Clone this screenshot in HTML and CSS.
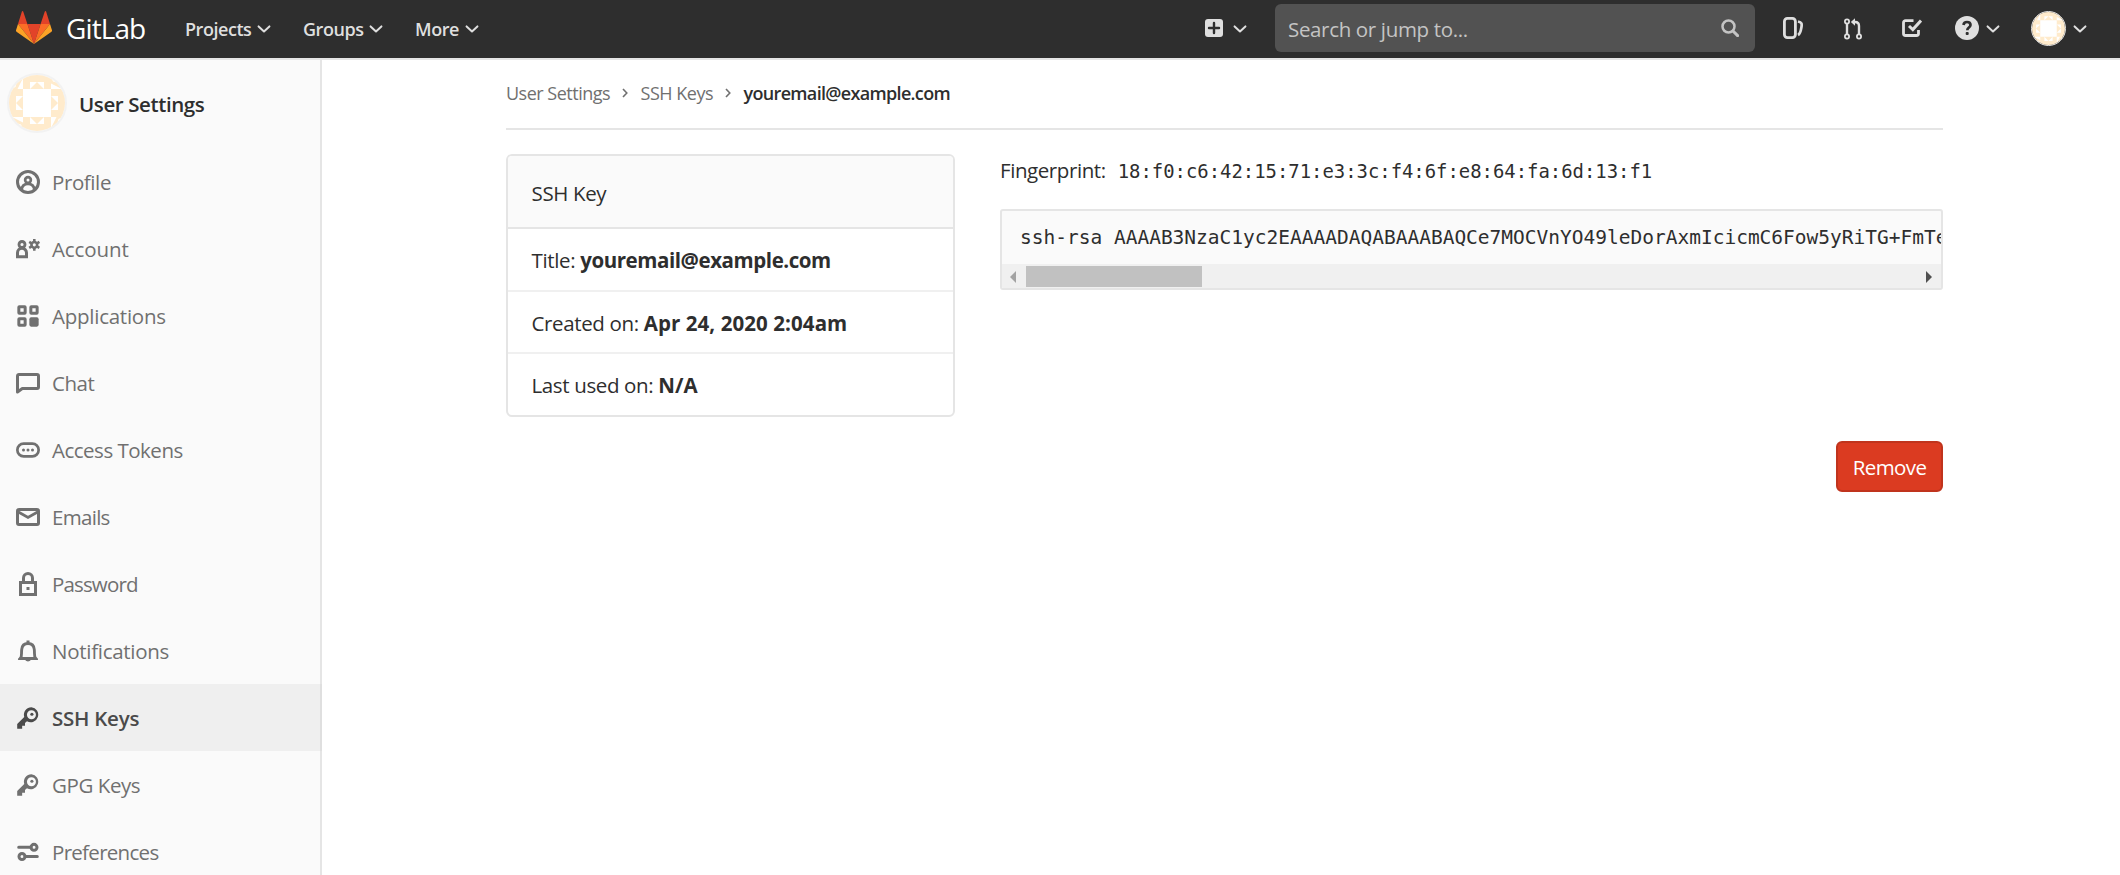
FILE: index.html
```html
<!DOCTYPE html>
<html lang="en">
<head>
<meta charset="utf-8">
<title>youremail@example.com · SSH Keys · User Settings · GitLab</title>
<link rel="stylesheet" href="styles.css">
</head>
<body>
<svg width="0" height="0" class="defs">
  <symbol id="chev" viewBox="0 0 14 8"><path d="M1.6 1.4 7 6.4l5.400-5" fill="none" stroke="currentColor" stroke-width="2" stroke-linecap="round" stroke-linejoin="round"/></symbol>
  <symbol id="sep" viewBox="0 0 6 10"><path d="M1 1l3.800 4L1 9" fill="none" stroke="currentColor" stroke-width="1.600"/></symbol>
  <symbol id="identicon" viewBox="0 0 56 56">
    <rect width="56" height="56" fill="#ffebcc"/>
    <g fill="#fff">
      <rect x="14" y="14" width="28" height="28"/>
      <g id="edge"><path d="M21 7h14v7L28 7l-7 7z"/><path d="M14 3v11H8.500zM8 6.500 6.500 12 2 14z"/></g>
      <use href="#edge" transform="rotate(90 28 28)"/><use href="#edge" transform="rotate(180 28 28)"/><use href="#edge" transform="rotate(270 28 28)"/>
    </g>
  </symbol>
  <symbol id="key" viewBox="0 0 16 16"><path d="M10.300 .8a5 5 0 0 0-4.800 6.500L.8 12v3.200h3.300v-2H6V11.300l1.300-1.200A5 5 0 1 0 10.300.8zm0 2a3 3 0 1 1 0 6 3 3 0 0 1 0-6z" fill="currentColor" fill-rule="evenodd"/><circle cx="10.600" cy="5.500" r="1.050" fill="currentColor"/></symbol>
</svg>
<header class="navbar">
  <svg class="logo" viewBox="0 0 36 33"><path fill="#e24329" d="M18 33l6.600-20H11.400z"/><path fill="#fc6d26" d="M18 33l-6.600-20H2zM18 33l6.600-20H34z"/><path fill="#fca326" d="M2 13 0 19.200c-.2.600 0 1.200.5 1.500L18 33zM34 13l2 6.200c.2.600 0 1.200-.5 1.500L18 33z"/><path fill="#e24329" d="M2 13h9.400L7.200.6c-.2-.7-1.100-.7-1.300 0zM34 13h-9.400L28.800.6c.2-.7 1.100-.7 1.300 0z"/></svg>
  <span class="brand">GitLab</span>
  <nav class="menu">
    <a class="m1">Projects</a><svg class="chev"><use href="#chev"/></svg>
    <a class="m2">Groups</a><svg class="chev"><use href="#chev"/></svg>
    <a class="m3">More</a><svg class="chev"><use href="#chev"/></svg>
  </nav>
  <div class="tools">
    <svg class="plus" viewBox="0 0 18 18"><rect width="18" height="18" rx="3" fill="currentColor"/><path d="M9 4v10M4 9h10" stroke="#2e2e2e" stroke-width="2.400" stroke-linecap="round"/></svg>
    <svg class="chev plus-chev"><use href="#chev"/></svg>
    <div class="search"><span>Search or jump to...</span><svg viewBox="0 0 18 18"><circle cx="7.500" cy="7.500" r="6" fill="none" stroke="currentColor" stroke-width="2.500"/><path d="M12 12l4.600 4.600" stroke="currentColor" stroke-width="3" stroke-linecap="round"/></svg></div>
    <svg class="issues" viewBox="0 0 20 22"><rect x="1.400" y="1.400" width="11" height="19.200" rx="3" fill="none" stroke="currentColor" stroke-width="2.800"/><path d="M15 4.500c3.800.8 4.100 2 3.400 6-.8 4.800-1.300 6.500-3.400 7.500" fill="none" stroke="currentColor" stroke-width="2.700"/></svg>
    <svg class="merge" viewBox="0 0 18 22"><g fill="none" stroke="currentColor"><g stroke-width="1.800"><circle cx="3" cy="3.500" r="2.100"/><circle cx="3" cy="18.500" r="2.100"/><circle cx="15" cy="18.500" r="2.100"/></g><path d="M3 5.500v11M15 16.500V8c0-2.500-1-4-4-4H9.500" stroke-width="2.400"/></g><path d="M6.800 4 11 .2v7.600z" fill="currentColor"/></svg>
    <svg class="todo" viewBox="0 0 20 20"><path d="M11.500 2.700H3.500a2 2 0 0 0-2 2v10.800a2 2 0 0 0 2 2h11a2 2 0 0 0 2-2v-3.500" fill="none" stroke="currentColor" stroke-width="2.800"/><path d="M7 8l3.800 3.500L19 2.500" fill="none" stroke="currentColor" stroke-width="3"/></svg>
    <svg class="help" viewBox="0 0 24 24"><circle cx="12" cy="12" r="12" fill="currentColor"/><path d="M8.500 9c.2-2 1.500-3 3.500-3s3.500 1.200 3.500 3c0 2.500-3.200 2.600-3.200 5.200" fill="none" stroke="#2e2e2e" stroke-width="2.700"/><rect x="10.700" y="16" width="3" height="3" rx="1" fill="#2e2e2e"/></svg>
    <svg class="chev help-chev"><use href="#chev"/></svg>
    <svg class="avatar-sm"><use href="#identicon"/></svg>
    <svg class="chev user-chev"><use href="#chev"/></svg>
  </div>
</header>
<div class="page">
  <aside class="sidebar">
    <div class="context"><svg class="avatar"><use href="#identicon"/></svg><strong>User Settings</strong></div>
    <ul>
      <li><svg viewBox="0 0 16 16"><g fill="none" stroke="currentColor" stroke-width="2"><circle cx="8" cy="8" r="7"/><circle cx="8" cy="6.700" r="1.900" stroke-width="1.800"/><path d="M3.700 13.300c.3-2.800 1.800-4 4.300-4s4 1.200 4.300 4" stroke-width="1.800"/></g></svg><span class="s-profile">Profile</span></li>
      <li><svg viewBox="0 0 16 16"><g fill="none" stroke="currentColor"><circle cx="4" cy="5" r="2" stroke-width="1.900"/><path d="M1 13.200v-2.700a3 3 0 0 1 6 0v2.700z" stroke-width="2"/><circle cx="12.200" cy="5.200" r="1.900" stroke-width="1.700"/><path d="M12.200 1.300v1.800M12.200 7.300v1.800M8.800 3.200l1.600 1M14 6.200l1.600 1M8.800 7.200l1.600-1M14 4.200l1.600-1" stroke-width="1.700"/></g></svg><span class="s-account">Account</span></li>
      <li><svg viewBox="0 0 16 16"><g fill="none" stroke="currentColor" stroke-width="2"><rect x="1.900" y="1.900" width="4.200" height="4.200" rx=".3"/><rect x="9.900" y="1.900" width="4.200" height="4.200" rx=".3"/><rect x="1.900" y="9.900" width="4.200" height="4.200" rx=".3"/></g><rect x="8.900" y="8.900" width="6.200" height="6.200" rx="1.200" fill="currentColor"/></svg><span class="s-apps">Applications</span></li>
      <li><svg viewBox="0 0 16 16"><path d="M1 14V3.300a1 1 0 0 1 1-1h12a1 1 0 0 1 1 1v7.400a1 1 0 0 1-1 1H4.200z" fill="none" stroke="currentColor" stroke-width="2" stroke-linejoin="round"/></svg><span class="s-chat">Chat</span></li>
      <li><svg viewBox="0 0 16 16"><rect x=".9" y="3.800" width="14.200" height="8.400" rx="4.200" fill="none" stroke="currentColor" stroke-width="1.800"/><g fill="currentColor"><circle cx="5" cy="8" r="1"/><circle cx="8" cy="8" r="1"/><circle cx="11" cy="8" r="1"/></g></svg><span class="s-tokens">Access Tokens</span></li>
      <li><svg viewBox="0 0 16 16"><g fill="none" stroke="currentColor" stroke-width="2"><rect x="1" y="3" width="14" height="10" rx="1"/><path d="M1 4.300l7 4 7-4" stroke-width="1.900"/></g></svg><span class="s-emails">Emails</span></li>
      <li><svg viewBox="0 0 16 16"><g fill="none" stroke="currentColor" stroke-width="2"><rect x="3" y="7" width="10" height="8"/><path d="M5 7V4a3 3 0 0 1 6 0v3"/></g><rect x="7" y="10" width="2" height="2" fill="currentColor"/></svg><span class="s-pass">Password</span></li>
      <li><svg viewBox="0 0 16 16"><path d="M3 13c1-1.500.5-3 .8-6C4 4.500 5.500 3 8 3s4 1.500 4.200 4c.3 3-.2 4.500.8 6z" fill="none" stroke="currentColor" stroke-width="1.900"/><path d="M1.300 13.900c0-1 .7-1.700 1.700-1.900h10c1 .2 1.700.9 1.700 1.900zM7 1h2v2H7zM6.300 14h3.400c-.3 1.300-3.100 1.300-3.400 0z" fill="currentColor"/></svg><span class="s-notif">Notifications</span></li>
      <li class="active"><svg><use href="#key"/></svg><span class="s-ssh">SSH Keys</span></li>
      <li><svg><use href="#key"/></svg><span class="s-gpg">GPG Keys</span></li>
      <li><svg viewBox="0 0 16 16"><g fill="none" stroke="currentColor" stroke-width="2" stroke-linecap="round"><circle cx="12" cy="4.900" r="2"/><circle cx="4" cy="11" r="2"/><path d="M1.800 4.900H10M6 11h8.200"/></g></svg><span class="s-pref">Preferences</span></li>
    </ul>
  </aside>
  <main class="content">
    <div class="crumbs"><a>User Settings</a><svg><use href="#sep"/></svg><a>SSH Keys</a><svg><use href="#sep"/></svg><strong>youremail@example.com</strong></div>
    <div class="columns">
      <section class="card">
        <h2>SSH Key</h2>
        <p>Title: <b class="email">youremail@example.com</b></p>
        <p>Created on: <b>Apr 24, 2020 2:04am</b></p>
        <p>Last used on: <b>N/A</b></p>
      </section>
      <section class="detail">
        <div class="finger"><span>Fingerprint:</span><code>18:f0:c6:42:15:71:e3:3c:f4:6f:e8:64:fa:6d:13:f1</code></div>
        <div class="keybox">
          <pre>ssh-rsa AAAAB3NzaC1yc2EAAAADAQABAAABAQCe7MOCVnYO49leDorAxmIcicmC6Fow5yRiTG+FmTe</pre>
          <div class="scroll"><svg class="left" viewBox="0 0 6 12"><path d="M6 0v12L0 6z" fill="#a3a3a3"/></svg><i></i><svg class="right" viewBox="0 0 6 12"><path d="M0 0v12l6-6z" fill="#505050"/></svg></div>
        </div>
        <button class="remove">Remove</button>
      </section>
    </div>
  </main>
</div>
</body>
</html>
```
FILE: styles.css
```css
* { box-sizing: border-box; }
body { margin: 0; height: 875px; overflow: hidden; font: 20.5px/30px "Open Sans", sans-serif; color: #2e2e2e; background: #fff; }
.defs { position: absolute; }
svg { display: block; flex: none; }
.navbar { display: flex; align-items: center; height: 60px; padding: 0 33px 2px 16px; background: #2e2e2e; box-shadow: inset 0 -2px #e5e5e5; color: #dfdfdf; }
.logo { width: 36px; height: 33px; margin-top: -3px; }
.brand { width: 78px; margin: -2px 0 0 14px; font-size: 28px; letter-spacing: -.9px; color: #fff; }
.menu { display: flex; align-items: center; margin-left: 41px; font-size: 18px; font-weight: 600; }
.menu a { white-space: nowrap; letter-spacing: -.45px; }
.m1 { width: 64px; }
.m2 { width: 58px; margin-left: 32px; }
.m3 { width: 42px; margin-left: 32px; }
.menu .chev { margin-left: 8px; }
.chev { width: 14px; height: 8px; }
.tools { display: flex; align-items: center; margin-left: auto; }
.plus { width: 18px; height: 18px; margin-top: -2px; }
.plus-chev { margin-left: 10px; }
.search { display: flex; align-items: center; justify-content: space-between; width: 480px; height: 48px; margin: -2px 28px 0 28px; padding: 0 16px 0 13px; border-radius: 6px; background: #525252; color: #c4c4c4; letter-spacing: -.34px; }
.search span { padding-top: 1px; }
.search svg { width: 18px; height: 18px; }
.issues { width: 20px; height: 22px; margin-top: -2px; }
.merge { width: 18px; height: 22px; margin: -1px 0 0 41px; }
.todo { width: 20px; height: 20px; margin: -3px 0 0 40px; }
.help { width: 24px; height: 24px; margin: -2px 0 0 33px; }
.help-chev { margin-left: 7px; }
.avatar-sm { width: 35px; height: 35px; margin: -2px 0 0 31px; border: 1px solid #e5e5e5; border-radius: 50%; }
.user-chev { margin-left: 7px; }
.page { display: flex; height: 815px; }
.sidebar { width: 322px; flex: none; border-right: 2px solid #e5e5e5; background: #fafafa; }
.context { display: flex; align-items: center; height: 88px; padding: 0 0 2px 7px; }
.avatar { width: 60px; height: 60px; border: 2px solid #f2f2f2; border-radius: 50%; }
.context strong { margin: 1px 0 0 12px; font-weight: 600; letter-spacing: -.4px; }
.sidebar ul { margin: 0; padding: 0; list-style: none; }
.sidebar li { display: flex; align-items: center; height: 67px; padding-left: 16px; color: #707070; white-space: nowrap; }
.sidebar li svg { width: 24px; height: 24px; }
.sidebar li span { margin-left: 12px; }
.sidebar .active { margin-right: -2px; background: #efefef; box-shadow: inset -2px 0 #dfdfdf; color: #4a4a4a; font-weight: 600; }
.s-profile { letter-spacing: -.4px; }
.s-account { letter-spacing: -.1px; }
.s-apps { letter-spacing: -.25px; }
.s-chat { letter-spacing: -.5px; }
.s-tokens { letter-spacing: -.5px; }
.s-emails { letter-spacing: -.7px; }
.s-pass { letter-spacing: -.85px; }
.s-notif { letter-spacing: -.28px; }
.sidebar .s-ssh { letter-spacing: -.25px; }
.s-gpg { letter-spacing: -.42px; }
.s-pref { letter-spacing: -.7px; }
.content { width: 1437px; margin-left: 184px; }
.crumbs { display: flex; align-items: center; height: 70px; padding-bottom: 2px; border-bottom: 2px solid #e5e5e5; font-size: 18px; color: #707070; letter-spacing: -.5px; white-space: nowrap; }
.crumbs svg { width: 6px; height: 10px; margin: 0 13px 0 11.5px; }
.crumbs strong { color: #2e2e2e; font-weight: 600; letter-spacing: -.67px; }
.columns { display: flex; gap: 45px; padding-top: 24px; }
.card { width: 449px; height: 263px; border: 2px solid #e5e5e5; border-radius: 6px; overflow: hidden; letter-spacing: -.36px; }
.card h2 { height: 73px; margin: 0; padding: 22px 23.5px 0; border-bottom: 2px solid #e5e5e5; background: #fafafa; font: inherit; line-height: 30px; }
.card p { height: 62px; margin: 0; padding: 16px 23.5px 0; border-bottom: 2px solid #f0f0f0; white-space: nowrap; }
.card h2 + p { height: 63px; }
.card p:last-child { border: 0; }
.card b { letter-spacing: .08px; }
.card .email { letter-spacing: -.43px; }
.detail { display: flex; flex-direction: column; width: 943px; }
.finger { display: flex; height: 55px; padding-top: 1px; letter-spacing: -.42px; white-space: nowrap; }
.finger code { margin-left: 12px; font: 18.9px/32px "DejaVu Sans Mono", monospace; letter-spacing: 0; }
.keybox { height: 81px; border: 2px solid #e5e5e5; border-radius: 3px; background: #fafafa; overflow: hidden; }
.keybox pre { height: 53px; margin: 0; padding: 11px 0 0 18px; font: 19.5px/31px "DejaVu Sans Mono", monospace; }
.scroll { display: flex; align-items: center; height: 25px; margin-left: -1px; padding: 0 9px; background: #f0f0f0; }
.scroll .left, .scroll .right { width: 6px; height: 12px; }
.scroll i { width: 176px; height: 21px; margin-left: 10px; background: #c1c1c1; }
.scroll .right { margin-left: auto; }
.remove { align-self: flex-end; width: 107px; height: 51px; margin-top: 151px; padding: 0; border: 2px solid #c0341d; border-radius: 6px; background: #db3b21; color: #fff; font: inherit; letter-spacing: -.6px; }
```
